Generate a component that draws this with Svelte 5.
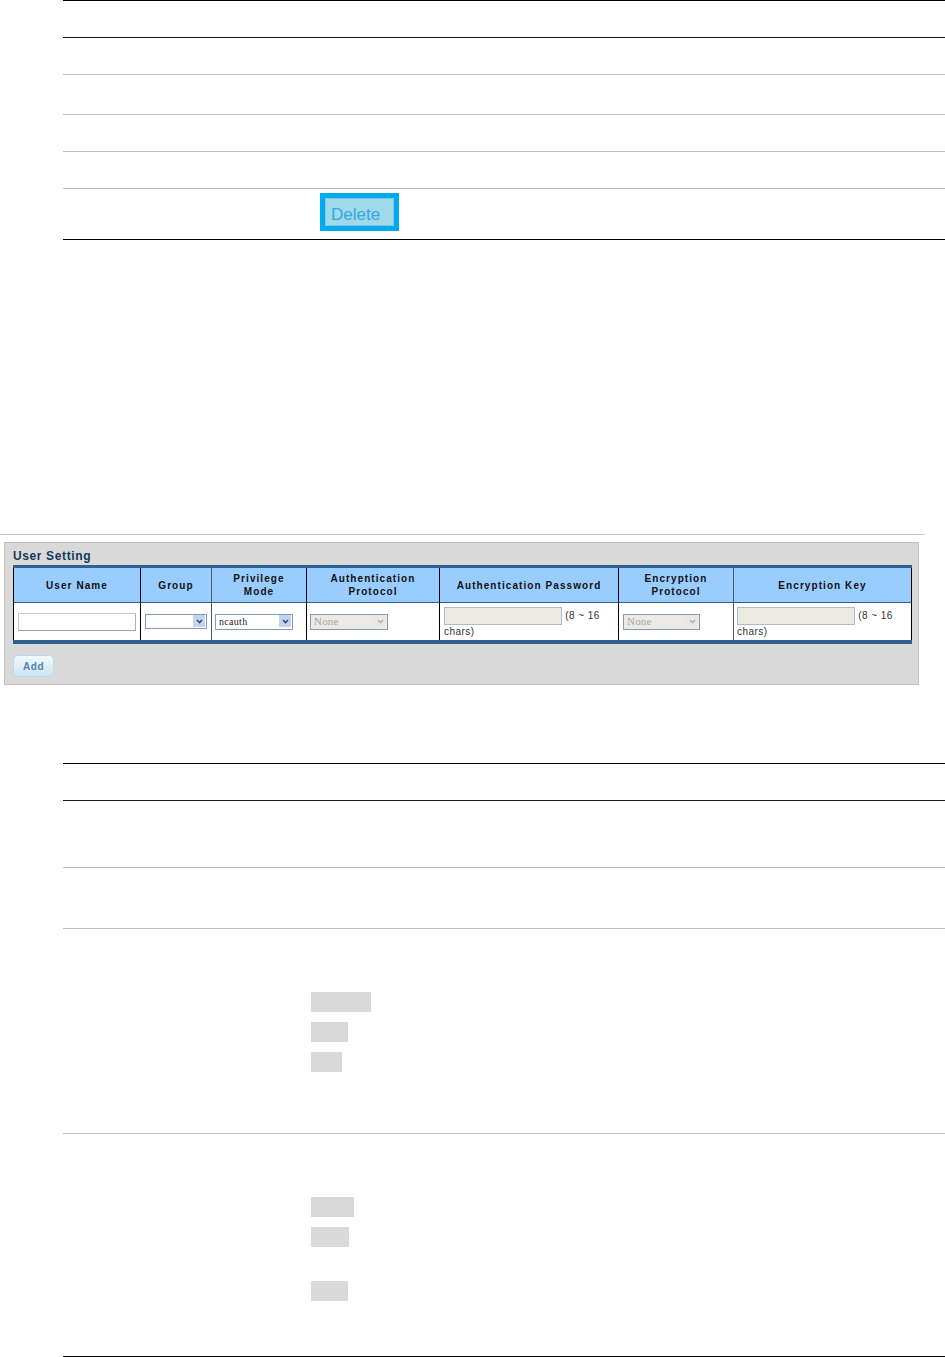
<script lang="ts">
	// Row heights of the two description tables, text itself is blank in the source page
	const topRows = [36, 40, 37, 37];

	const columns = [
		{ label: 'User Name', width: 127 },
		{ label: 'Group', width: 71 },
		{ label: 'Privilege\nMode', width: 95 },
		{ label: 'Authentication\nProtocol', width: 133 },
		{ label: 'Authentication Password', width: 179 },
		{ label: 'Encryption\nProtocol', width: 115 },
		{ label: 'Encryption Key', width: 179 }
	];

	const modeChips = [60, 37, 31];
	const levelChips = [
		{ width: 43, gap: 0 },
		{ width: 38, gap: 0 },
		{ width: 37, gap: 24 }
	];
</script>

{#snippet arrow(disabled: boolean)}
	<span class="arrow" class:off={disabled}>
		<svg width="9" height="7" viewBox="0 0 9 7">
			<path d="M2 2L4.5 4.5L7 2" fill="none" stroke-width="1.6" />
		</svg>
	</span>
{/snippet}

<main>
	<section class="rules top">
		<div class="head"></div>
		{#each topRows as height, i}
			<div class="row" class:flush={i === 0} style="height: {height}px"></div>
		{/each}
		<div class="row action">
			<button type="button" class="delete">Delete</button>
		</div>
	</section>

	<div class="hairline"></div>

	<section class="panel">
		<h2>User Setting</h2>
		<table>
			<colgroup>
				{#each columns as col}
					<col style="width: {col.width}px" />
				{/each}
			</colgroup>
			<thead>
				<tr>
					{#each columns as col}
						<th>{col.label}</th>
					{/each}
				</tr>
			</thead>
			<tbody>
				<tr>
					<td class="center"><input class="name" type="text" /></td>
					<td class="center">
						<div class="select group">{@render arrow(false)}</div>
					</td>
					<td class="center mode">
						<div class="select"><span>ncauth</span>{@render arrow(false)}</div>
					</td>
					<td class="center mode">
						<div class="select off"><span>None</span>{@render arrow(true)}</div>
					</td>
					<td class="pass"><input type="text" disabled /> (8 ~ 16 chars)</td>
					<td class="center">
						<div class="select off enc"><span>None</span>{@render arrow(true)}</div>
					</td>
					<td class="pass key"><input type="text" disabled /> (8 ~ 16 chars)</td>
				</tr>
			</tbody>
		</table>
		<button type="button" class="add">Add</button>
	</section>

	<section class="rules bottom">
		<div class="head"></div>
		<div class="row flush" style="height: 66px"></div>
		<div class="row" style="height: 61px"></div>
		<div class="row chips modes">
			{#each modeChips as width}
				<span class="chip" style="width: {width}px"></span>
			{/each}
		</div>
		<div class="row chips levels">
			{#each levelChips as chip}
				<span class="chip" style="width: {chip.width}px; margin-top: {chip.gap}px"></span>
			{/each}
		</div>
	</section>
</main>

<style>
	:global(body) {
		background: #fff;
		font-family: 'Liberation Sans', Arial, sans-serif;
	}

	main {
		width: 945px;
		height: 1357px;
		overflow: hidden;
	}

	.rules {
		margin-left: 63px;
		border-top: 1px solid #000;
		border-bottom: 1px solid #000;
	}

	.head {
		box-sizing: border-box;
		height: 37px;
		border-bottom: 1px solid #1a1a1a;
	}

	.row {
		box-sizing: border-box;
		border-top: 1px solid #bdbdbd;
	}

	.row.flush {
		border-top: none;
	}

	.action {
		height: 51px;
		padding: 4px 0 0 257px;
	}

	.delete {
		display: block;
		box-sizing: border-box;
		width: 79px;
		height: 38px;
		padding: 6px 0 0 6px;
		border: 5px solid #00aaec;
		outline: 1px solid #7ccbe8;
		outline-offset: -6px;
		background: #9fd9ea;
		color: #2fa8e4;
		font: 17px 'Liberation Sans', Arial, sans-serif;
		text-align: left;
	}

	.hairline {
		width: 925px;
		height: 1px;
		margin-top: 294px;
		background: #c8c8c8;
	}

	.panel {
		box-sizing: border-box;
		width: 915px;
		height: 143px;
		margin: 7px 0 0 4px;
		padding: 5px 6px 0 8px;
		border: 1px solid #c0c0c0;
		background: #d9d9d9;
	}

	h2 {
		margin: 0;
		height: 17px;
		color: #12395c;
		font-size: 12px;
		font-weight: 700;
		line-height: 17px;
		letter-spacing: 0.62px;
	}

	table {
		width: 899px;
		table-layout: fixed;
		border-collapse: separate;
		border-spacing: 0;
		border-top: 3px solid #2f6090;
		border-bottom: 4px solid #2f6090;
		background: #fff;
	}

	th,
	td {
		box-sizing: border-box;
		padding: 0;
		border-left: 1px solid #000;
		color: #222;
		font-size: 10px;
		letter-spacing: 1px;
	}

	th:last-child,
	td:last-child {
		border-right: 1px solid #000;
	}

	th:nth-child(3),
	td:nth-child(3),
	th:nth-child(7),
	td:nth-child(7) {
		border-left-color: #555;
	}

	th {
		height: 35px;
		border-bottom: 1px solid #2f6090;
		background: #99ccff;
		color: #111;
		font-weight: 700;
		line-height: 13px;
		letter-spacing: 1.07px;
		white-space: pre-line;
	}

	td {
		height: 37px;
	}

	.center {
		padding-left: 4px;
		vertical-align: middle;
	}

	.center.mode {
		padding-left: 3px;
	}

	input {
		box-sizing: border-box;
		width: 118px;
		height: 18px;
		margin: 0;
		padding: 0;
		border: 1px solid #b7c9d6;
		border-right-color: #9db4c8;
		border-bottom-color: #8aa8c4;
		background: #fff;
		vertical-align: middle;
	}

	input:disabled {
		border-color: #a9bccf;
		background: #ebeae3;
	}

	.pass {
		padding: 4px 4px 0;
		line-height: 13px;
		color: #333;
		letter-spacing: 0.45px;
		vertical-align: top;
	}

	.pass.key {
		padding-left: 3px;
	}

	.select {
		display: flex;
		align-items: center;
		justify-content: space-between;
		box-sizing: border-box;
		width: 78px;
		height: 16px;
		padding: 0 1px 1px 3px;
		border: 1px solid #7f9db9;
		background: #fff;
		color: #222;
		font: 10px 'Liberation Serif', 'Times New Roman', serif;
		letter-spacing: 0.3px;
	}

	.group {
		width: 62px;
		height: 15px;
		justify-content: flex-end;
	}

	.select.off {
		background: #ebeae3;
		color: #a8a89c;
		font-size: 11px;
		letter-spacing: 0.2px;
	}

	.enc {
		width: 77px;
	}

	.arrow {
		display: flex;
		align-items: center;
		justify-content: center;
		width: 12px;
		height: 12px;
		background: #c3d3ee;
		stroke: #2f4f7f;
	}

	.arrow.off {
		background: #e9e8e2;
		stroke: #b5b5ac;
	}

	.add {
		display: block;
		width: 41px;
		height: 22px;
		margin-top: 11px;
		padding: 0;
		border: 1px solid #bcd9ea;
		border-radius: 5px;
		background: linear-gradient(#f2f9fc, #cce4f4);
		color: #4a86ad;
		font: 700 10px 'Liberation Sans', Arial, sans-serif;
		letter-spacing: 0.6px;
	}

	.bottom {
		margin-top: 78px;
	}

	.chips {
		display: flex;
		flex-direction: column;
		align-items: flex-start;
		gap: 10px;
		padding-left: 248px;
	}

	.modes {
		height: 205px;
		padding-top: 63px;
	}

	.levels {
		height: 223px;
		padding-top: 63px;
	}

	.chip {
		display: block;
		flex: none;
		height: 20px;
		background: #d9d9d9;
	}
</style>
